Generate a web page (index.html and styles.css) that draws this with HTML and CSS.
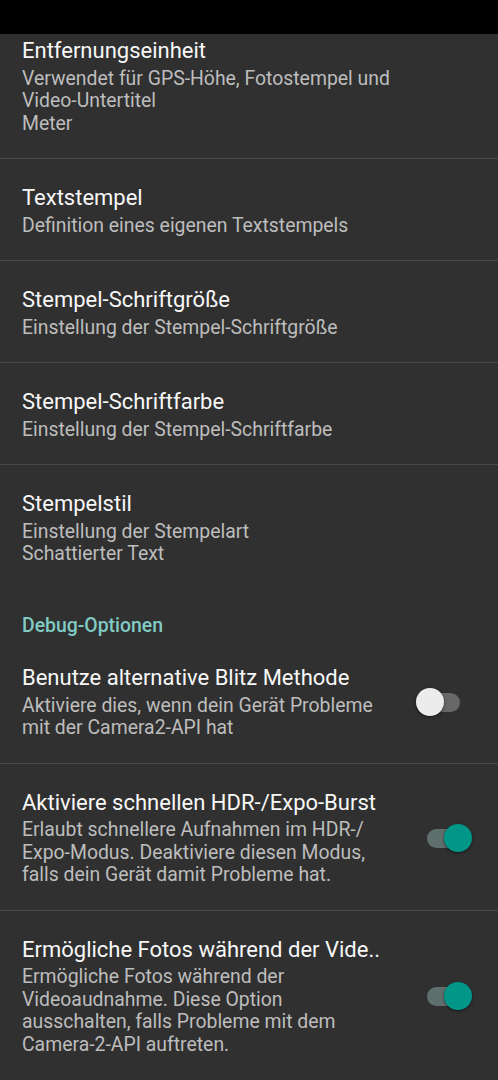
FILE: index.html
```html
<!DOCTYPE html>
<html lang="de">
<head>
<meta charset="utf-8">
<title>Einstellungen</title>
<link rel="stylesheet" href="styles.css">
</head>
<body>
<div class="statusbar"></div>
<main class="list">
  <div class="pref pref-first divided">
    <div class="text">
      <div class="title">Entfernungseinheit</div>
      <div class="summary">Verwendet für GPS-Höhe, Fotostempel und <span class="nobreak">Video-Untertitel</span><br>Meter</div>
    </div>
  </div>
  <div class="pref divided">
    <div class="text">
      <div class="title">Textstempel</div>
      <div class="summary">Definition eines eigenen Textstempels</div>
    </div>
  </div>
  <div class="pref divided">
    <div class="text">
      <div class="title">Stempel-Schriftgröße</div>
      <div class="summary">Einstellung der Stempel-Schriftgröße</div>
    </div>
  </div>
  <div class="pref divided">
    <div class="text">
      <div class="title">Stempel-Schriftfarbe</div>
      <div class="summary">Einstellung der Stempel-Schriftfarbe</div>
    </div>
  </div>
  <div class="pref">
    <div class="text">
      <div class="title">Stempelstil</div>
      <div class="summary">Einstellung der Stempelart<br>Schattierter Text</div>
    </div>
  </div>

  <div class="category">Debug-Optionen</div>

  <div class="pref divided with-widget">
    <div class="text">
      <div class="title">Benutze alternative Blitz Methode</div>
      <div class="summary">Aktiviere dies, wenn dein Gerät Probleme mit der Camera2-API hat</div>
    </div>
    <div class="widget">
      <span class="switch"><span class="track"></span><span class="thumb"></span></span>
    </div>
  </div>
  <div class="pref divided with-widget">
    <div class="text">
      <div class="title">Aktiviere schnellen HDR-/Expo-Burst</div>
      <div class="summary">Erlaubt schnellere Aufnahmen im HDR-/ Expo-Modus. Deaktiviere diesen Modus, falls dein Gerät damit Probleme hat.</div>
    </div>
    <div class="widget">
      <span class="switch on"><span class="track"></span><span class="thumb"></span></span>
    </div>
  </div>
  <div class="pref with-widget">
    <div class="text">
      <div class="title">Ermögliche Fotos während der Vide..</div>
      <div class="summary">Ermögliche Fotos während der Videoaudnahme. Diese Option ausschalten, falls Probleme mit dem Camera-2-API auftreten.</div>
    </div>
    <div class="widget">
      <span class="switch on"><span class="track"></span><span class="thumb"></span></span>
    </div>
  </div>
</main>
</body>
</html>
```
FILE: styles.css
```css
html, body {
  margin: 0;
  padding: 0;
}

body {
  background: #303030;
  font-family: Roboto, "Noto Sans", "Liberation Sans", sans-serif;
  color: #f5f5f5;
  width: 498px;
  height: 1080px;
  overflow: hidden;
}

.statusbar {
  height: 34px;
  background: #000;
}

.list {
  display: flex;
  flex-direction: column;
}

.pref {
  display: flex;
  align-items: center;
  padding: 26px 22px 23px 22px;
}

.pref-first {
  padding-top: 4px;
}

.divided {
  border-bottom: 1px solid #474747;
}

.text {
  flex: 1;
  min-width: 0;
  display: flex;
  flex-direction: column;
  gap: 3.5px;
}

.title {
  font-size: 22px;
  line-height: 26px;
  color: #f7f7f7;
  white-space: nowrap;
}

.summary {
  font-size: 19.4px;
  line-height: 22.5px;
  color: #bdbdbd;
}

.nobreak {
  white-space: nowrap;
}

.category {
  padding: 26px 22px 2px 22px;
  font-size: 19.4px;
  line-height: 22.5px;
  font-weight: 500;
  color: #80cbc4;
}

.widget {
  width: 91px;
  flex: none;
  display: flex;
  justify-content: flex-end;
  padding-right: 4px;
  box-sizing: border-box;
}

.switch {
  position: relative;
  width: 56px;
  height: 28px;
  display: block;
}

.track {
  position: absolute;
  left: 11px;
  top: 4.5px;
  width: 33px;
  height: 19px;
  border-radius: 9.5px;
  background: #686868;
}

.thumb {
  position: absolute;
  left: 0;
  top: 0;
  width: 28px;
  height: 28px;
  border-radius: 50%;
  background: #ececec;
  box-shadow: 0 1px 3px rgba(0, 0, 0, 0.55);
}

.switch.on .track {
  background: #5f6f6d;
}

.switch.on .thumb {
  left: 28px;
  background: #009688;
}
```
